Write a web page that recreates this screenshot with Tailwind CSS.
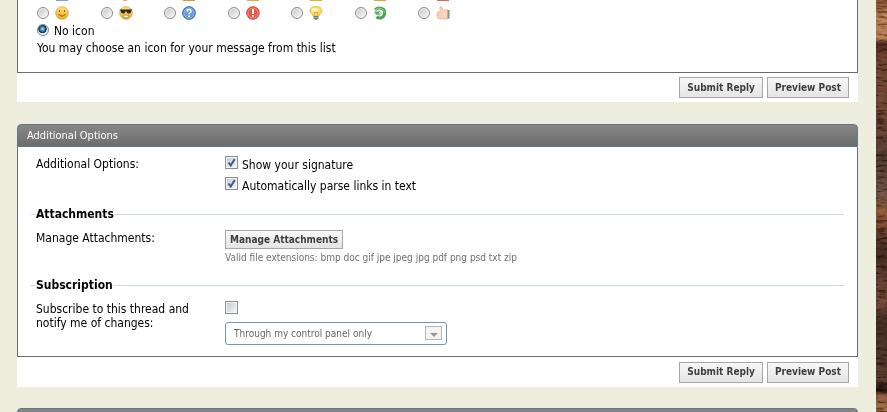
<!DOCTYPE html>
<html lang="en">
<head>
    <meta charset="UTF-8">
    <meta name="viewport" content="width=device-width, initial-scale=1.0">
    <title>Reply to Thread</title>
    <script src="https://cdn.jsdelivr.net/npm/@tailwindcss/browser@4"></script>
</head>
<body class="flex h-screen overflow-hidden bg-[#4a2e20] font-['DejaVu_Sans_Condensed','DejaVu_Sans',sans-serif] text-xs text-black">
    <main class="min-w-0 flex-1 bg-[#edeede] pl-[17px] pr-[18px]">
        <form>
            <!-- Message icons -->
            <section class="bg-white">
                <div class="border-x border-b border-[#6b6b6b] px-[19px] pb-3.5">
                    <div class="grid h-0.5 w-[445px] grid-cols-7 overflow-hidden" aria-hidden="true">
                        <i class="ml-[19px] h-px w-3 bg-[#8f9ad0]"></i>
                        <i class="ml-[22px] h-px w-1 bg-[#f2a58c]"></i>
                        <i class="ml-[19px] h-px w-3 bg-[#d9963f]"></i>
                        <i class="ml-[19px] h-px w-3 bg-[#dfae4c]"></i>
                        <i class="ml-[19px] h-px w-3 bg-[#dfae4c]"></i>
                        <i class="ml-[19px] h-px w-3 bg-[#dba545]"></i>
                        <i class="ml-[19px] h-px w-3 bg-[#d96a58]"></i>
                    </div>
                    <div class="mt-1 grid w-[445px] grid-cols-7">
                        <label class="flex items-center gap-1.5">
                            <input type="radio" name="icon" aria-label="Smile" class="size-3 appearance-none rounded-full border border-[#8a8b8c] bg-linear-to-br from-[#c4c6c9] to-[#fafafa] shadow-[inset_0_0_0_1px_#f4f4f4]">
                            <svg class="size-3.5" viewBox="0 0 14 14">
                                <defs><linearGradient id="gold" x2="0" y2="1"><stop stop-color="#ffe57a"/><stop offset="1" stop-color="#e9ab25"/></linearGradient></defs>
                                <circle cx="7" cy="7" r="6.3" fill="url(#gold)" stroke="#d9a232" stroke-width=".8"/>
                                <path d="M4.500 4v2M9.500 4v2M3.500 8q3.500 4.200 7 0" fill="none" stroke="#a16313" stroke-width="1.1"/>
                            </svg>
                        </label>
                        <label class="flex items-center gap-1.5">
                            <input type="radio" name="icon" aria-label="Cool" class="size-3 appearance-none rounded-full border border-[#8a8b8c] bg-linear-to-br from-[#c4c6c9] to-[#fafafa] shadow-[inset_0_0_0_1px_#f4f4f4]">
                            <svg class="size-3.5" viewBox="0 0 14 14">
                                <circle cx="7" cy="7" r="6.3" fill="url(#gold)" stroke="#d9a232" stroke-width=".8"/>
                                <path d="M.3 3.4h13.4l-1.3 1.2q-.3 3.2-2.7 3-2-.2-2.3-2.4h-.8Q6.300 7.400 4.300 7.600 1.900 7.800 1.600 4.600z" fill="#2b2720"/>
                                <path d="M4 9.300h6q-.4 2.600-3 2.600T4 9.300z" fill="#fff" stroke="#a86a1a" stroke-width=".6"/>
                            </svg>
                        </label>
                        <label class="flex items-center gap-1.5">
                            <input type="radio" name="icon" aria-label="Question" class="size-3 appearance-none rounded-full border border-[#8a8b8c] bg-linear-to-br from-[#c4c6c9] to-[#fafafa] shadow-[inset_0_0_0_1px_#f4f4f4]">
                            <svg class="size-3.5" viewBox="0 0 14 14">
                                <circle cx="7" cy="7" r="6.400" fill="#3f78b8" stroke="#2f66a8" stroke-width=".8"/>
                                <circle cx="7" cy="7" r="5.200" fill="#6b9bd1" stroke="#a9c7e8" stroke-width=".7"/>
                                <path d="M5 5.500q0-2 2-2t2 1.700q0 1-1.100 1.600-.9.500-.9 1.500" fill="none" stroke="#fff" stroke-width="1.500"/>
                                <circle cx="7" cy="10.200" r=".9" fill="#fff"/>
                            </svg>
                        </label>
                        <label class="flex items-center gap-1.5">
                            <input type="radio" name="icon" aria-label="Exclamation" class="size-3 appearance-none rounded-full border border-[#8a8b8c] bg-linear-to-br from-[#c4c6c9] to-[#fafafa] shadow-[inset_0_0_0_1px_#f4f4f4]">
                            <svg class="size-3.5" viewBox="0 0 14 14">
                                <circle cx="7" cy="7" r="6.400" fill="#d94436" stroke="#d4574b" stroke-width=".8"/>
                                <circle cx="7" cy="7" r="5" fill="#e2574a" stroke="#f0a49c" stroke-width=".8"/>
                                <path d="M7 3v5" stroke="#fff" stroke-width="1.800"/>
                                <circle cx="7" cy="10" r="1" fill="#fff"/>
                            </svg>
                        </label>
                        <label class="flex items-center gap-1.5">
                            <input type="radio" name="icon" aria-label="Lightbulb" class="size-3 appearance-none rounded-full border border-[#8a8b8c] bg-linear-to-br from-[#c4c6c9] to-[#fafafa] shadow-[inset_0_0_0_1px_#f4f4f4]">
                            <svg class="size-3.5" viewBox="0 0 14 14">
                                <path d="M7 .5c3.800 0 6 2 6 4.500 0 2.400-2.500 3-3 5H4C3.500 8 1 7.400 1 5 1 2.500 3.200.5 7 .5z" fill="#fbdc62" stroke="#e0ae3c" stroke-width=".8"/>
                                <ellipse cx="6" cy="3.800" rx="3.200" ry="2" fill="#fff6b8"/>
                                <path d="M5.500 9.500V6.500h3v3" fill="none" stroke="#d9a035" stroke-width=".8"/>
                                <path d="M4.500 10h5v2.500L8 13.700H6l-1.500-1.200z" fill="#77777a"/>
                                <path d="M4.500 11.500h5" stroke="#c6c6c8" stroke-width=".7"/>
                            </svg>
                        </label>
                        <label class="flex items-center gap-1.5">
                            <input type="radio" name="icon" aria-label="Arrow" class="size-3 appearance-none rounded-full border border-[#8a8b8c] bg-linear-to-br from-[#c4c6c9] to-[#fafafa] shadow-[inset_0_0_0_1px_#f4f4f4]">
                            <svg class="size-3.5" viewBox="0 0 14 14">
                                <path d="M2 3.800Q5 1.300 8.500 2.400t3.200 4.600-3.400 4.800q-2.900.8-4.800-1" fill="none" stroke="#4aa353" stroke-width="3"/>
                                <path d="M2.500 3.500Q5.200 1.400 8.500 2.500t3 4.500" fill="none" stroke="#93d093" stroke-width="1"/>
                                <path d="M1 5.500l4.500 0V4L9 7.200l-3.500 3V8.500L3 9z" fill="#5fb366"/>
                                <path d="M6.300 5.500v3.400l2-1.700z" fill="#e8f5e6"/>
                            </svg>
                        </label>
                        <label class="flex items-center gap-1.5">
                            <input type="radio" name="icon" aria-label="Thumbs up" class="size-3 appearance-none rounded-full border border-[#8a8b8c] bg-linear-to-br from-[#c4c6c9] to-[#fafafa] shadow-[inset_0_0_0_1px_#f4f4f4]">
                            <svg class="size-3.5" viewBox="0 0 14 14">
                                <path d="M4 .6Q5.800 0 6.200 2l1.200 2.500L9 3.500l2.500.5v9H3.500Q1.800 13 1.900 11.500.4 10.800 1 9.400 0 8.300 1.200 7.200q-.3-1.600 1.300-1.900l2.100-.2Q3.500 3 4 .6z" fill="#f9d3bf" stroke="#f0b59e" stroke-width=".7"/>
                                <path d="M1.200 7.300h3.500M1.200 9.400h3.500M1.900 11.500h2.800" stroke="#f0b59e" stroke-width=".6"/>
                                <path d="M11.500 4h2v8.700h-2z" fill="#6fa566"/>
                            </svg>
                        </label>
                    </div>
                    <label class="mt-0.5 flex h-[17px] items-center gap-[5px]">
                        <input type="radio" name="icon" checked class="mb-0.5 size-3 appearance-none rounded-full border border-[#7b8894] bg-[radial-gradient(circle_at_45%_40%,#7fd0ee_0_10%,#1d5b86_35%,#12344f_48%,#e6ebee_55%)]">
                        No icon
                    </label>
                    <p class="leading-[19px]">You may choose an icon for your message from this list</p>
                </div>
                <div class="flex h-[29px] items-center justify-end gap-1 pr-[9px]">
                    <button type="submit" class="h-[21px] border border-[#a6a6a6] bg-linear-to-b from-[#f8f8f8] to-[#e4e4e4] px-[7px] text-[10px] font-bold text-[#3e3e3e]">Submit Reply</button>
                    <button type="button" class="h-[21px] border border-[#a6a6a6] bg-linear-to-b from-[#f8f8f8] to-[#e4e4e4] px-[7px] text-[10px] font-bold text-[#3e3e3e]">Preview Post</button>
                </div>
            </section>

            <!-- Additional options -->
            <section class="mt-[22px] rounded-t bg-white">
                <h2 class="h-[23px] rounded-t border border-[#5f7986] bg-linear-to-b from-[#878787] to-[#6d6d6d] pl-[9px] text-[11px] leading-[21px] text-white">Additional Options</h2>
                <div class="border-x border-b border-[#6b6b6b] px-[13px] pb-[11px] pt-[7px]">
                    <div class="flex pl-[5px]">
                        <p class="w-[189px] leading-[21px]">Additional Options:</p>
                        <div>
                            <label class="flex h-[21px] items-center gap-1">
                                <span class="mb-1 grid size-[13px]">
                                    <input type="checkbox" checked class="peer size-[13px] appearance-none border border-[#8a8f94] bg-linear-to-br from-[#c3cbd5] to-[#f8f9fa] shadow-[inset_0_0_0_1px_#f4f4f4] [grid-area:1/1]">
                                    <svg class="pointer-events-none hidden size-[13px] [grid-area:1/1] peer-checked:block" viewBox="0 0 13 13"><path d="M3.500 6.500l2.200 3L9.800 3" fill="none" stroke="#45558d" stroke-width="2"/></svg>
                                </span>
                                Show your signature
                            </label>
                            <label class="flex h-[21px] items-center gap-1">
                                <span class="mb-1 grid size-[13px]">
                                    <input type="checkbox" checked class="peer size-[13px] appearance-none border border-[#8a8f94] bg-linear-to-br from-[#c3cbd5] to-[#f8f9fa] shadow-[inset_0_0_0_1px_#f4f4f4] [grid-area:1/1]">
                                    <svg class="pointer-events-none hidden size-[13px] [grid-area:1/1] peer-checked:block" viewBox="0 0 13 13"><path d="M3.500 6.500l2.200 3L9.800 3" fill="none" stroke="#45558d" stroke-width="2"/></svg>
                                </span>
                                Automatically parse links in text
                            </label>
                        </div>
                    </div>

                    <h3 class="mt-2.5 flex h-4 items-center text-xs font-bold leading-4 before:w-[5px] before:border-t before:border-[#c9d8e2] after:flex-1 after:border-t after:border-[#c9d8e2]">Attachments</h3>
                    <div class="mt-2 flex pl-[5px]">
                        <p class="w-[189px] leading-[17px]">Manage Attachments:</p>
                        <div>
                            <button type="button" class="block h-[19px] border border-[#a6a6a6] bg-linear-to-b from-[#f8f8f8] to-[#e4e4e4] px-1 text-[10px] font-bold text-[#3e3e3e]">Manage Attachments</button>
                            <p class="text-[10px] leading-[17px] text-[#707070]">Valid file extensions: bmp doc gif jpe jpeg jpg pdf png psd txt zip</p>
                        </div>
                    </div>

                    <h3 class="mt-[11px] flex h-4 items-center text-xs font-bold leading-4 before:w-[5px] before:border-t before:border-[#c9d8e2] after:flex-1 after:border-t after:border-[#c9d8e2]">Subscription</h3>
                    <div class="mt-2 flex pl-[5px]">
                        <label for="emailupdate" class="w-[189px] pr-6 pt-px leading-[14px]">Subscribe to this thread and notify me of changes:</label>
                        <div>
                            <input type="checkbox" id="subscribe" aria-label="Subscribe" class="block size-[13px] appearance-none border border-[#8a8f94] bg-linear-to-br from-[#c3c5c8] to-[#f8f9fa] shadow-[inset_0_0_0_1px_#f4f4f4]">
                            <div class="relative mt-2 w-[222px]">
                                <select id="emailupdate" class="block h-[23px] w-full appearance-none rounded-[3px] border border-[#7597ae] bg-white px-2 text-[10px] text-[#666]">
                                    <option>Through my control panel only</option>
                                </select>
                                <span class="pointer-events-none absolute right-[5px] top-1 flex h-3.5 w-[17px] items-center justify-center border border-[#b5b5b5] bg-[#f4f4f4]">
                                    <svg class="mt-1 h-1 w-2" viewBox="0 0 8 4"><path d="M0 0h8L4 4z" fill="#999"/></svg>
                                </span>
                            </div>
                        </div>
                    </div>
                </div>
                <div class="flex h-[30px] items-center justify-end gap-1 pr-[9px]">
                    <button type="submit" class="h-[21px] border border-[#a6a6a6] bg-linear-to-b from-[#f8f8f8] to-[#e4e4e4] px-[7px] text-[10px] font-bold text-[#3e3e3e]">Submit Reply</button>
                    <button type="button" class="h-[21px] border border-[#a6a6a6] bg-linear-to-b from-[#f8f8f8] to-[#e4e4e4] px-[7px] text-[10px] font-bold text-[#3e3e3e]">Preview Post</button>
                </div>
            </section>

            <div class="mt-[21px] h-[23px] rounded-t border border-[#5f7986] bg-linear-to-b from-[#878787] to-[#6d6d6d]"></div>
        </form>
    </main>

    <!-- Wood backdrop -->
    <aside class="w-[11px] bg-[linear-gradient(#6d402a_0,#a06c47_14px,#9a6744_38px,#3d2015_44px,#5e3a28_60px,#5b3a2a_120px,#443029_160px,#5d4437_195px,#7a4a2e_215px,#38231b_250px,#5c3b2c_300px,#35231c_325px,#4a3226_380px,#20120c_391px,#70482f_395px,#8a5c3c_412px)]" aria-hidden="true">
        <svg class="size-full opacity-30 mix-blend-overlay">
            <filter id="grain">
                <feTurbulence type="fractalNoise" baseFrequency=".09 .35" numOctaves="3" seed="4"/>
                <feColorMatrix values="3 0 0 0 -1  3 0 0 0 -1  3 0 0 0 -1  0 0 0 0 1"/>
            </filter>
            <rect width="100%" height="100%" filter="url(#grain)"/>
        </svg>
    </aside>
</body>
</html>
